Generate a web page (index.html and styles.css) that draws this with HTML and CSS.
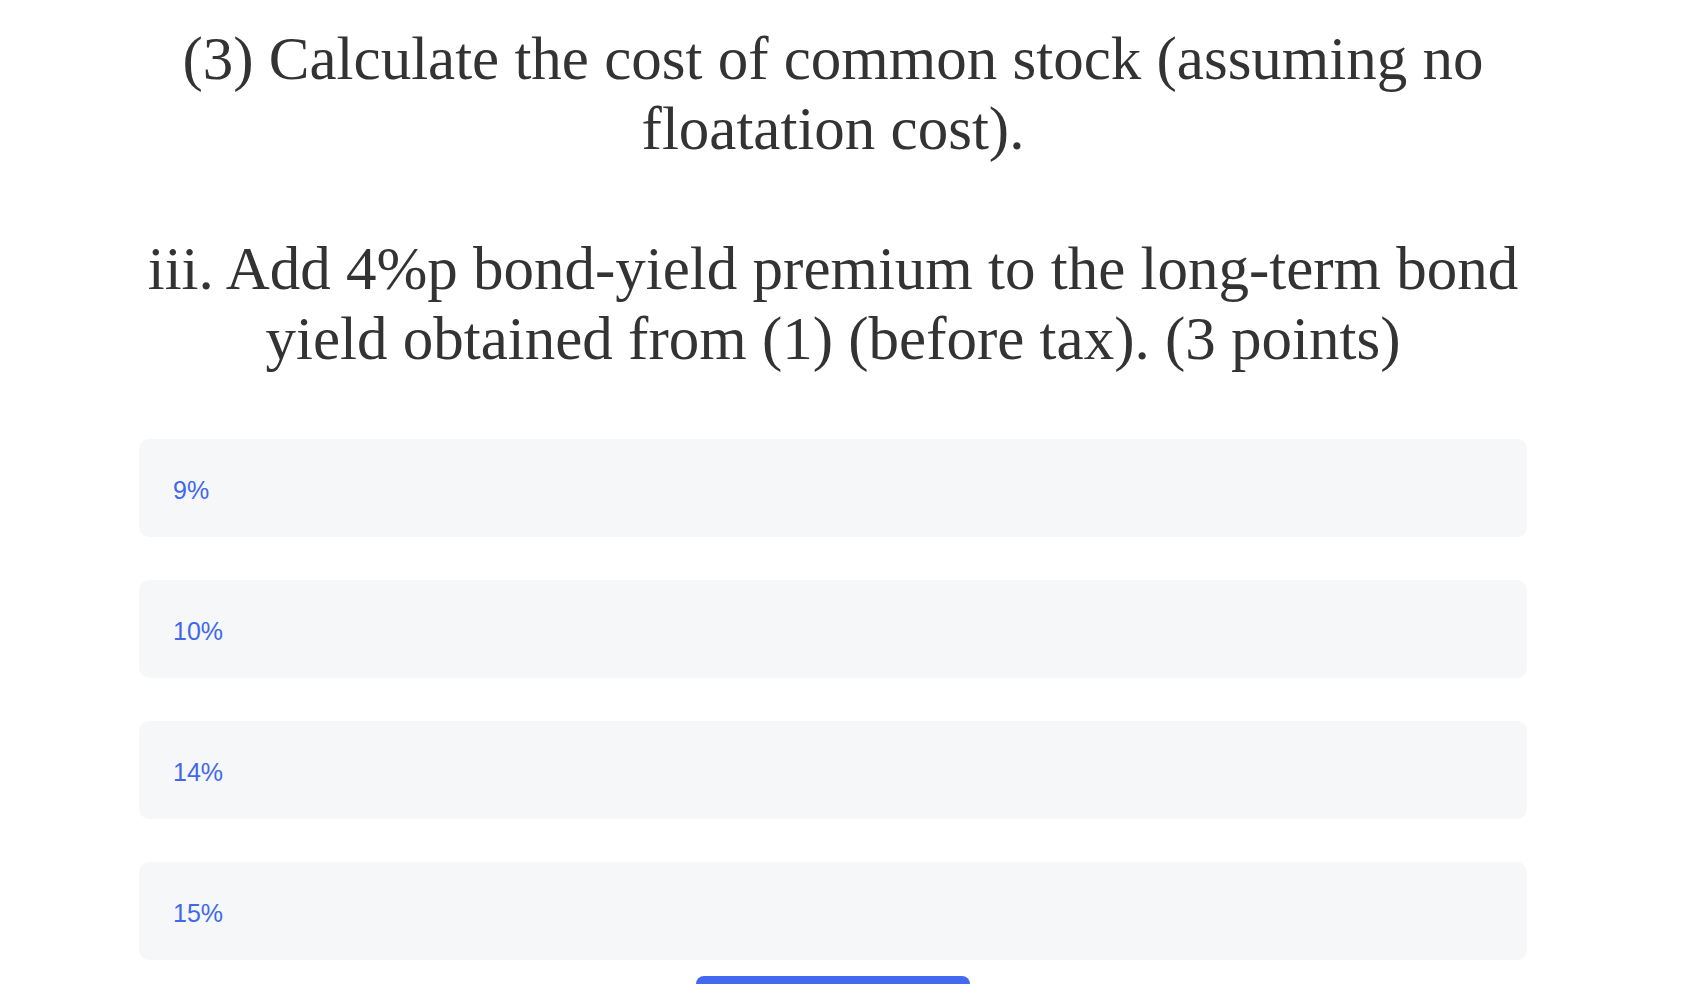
FILE: index.html
```html
<!DOCTYPE html>
<html lang="en">
<head>
    <meta charset="UTF-8">
    <meta name="viewport" content="width=device-width, initial-scale=1.0">
    <title>Quiz</title>
    <link rel="stylesheet" href="styles.css">
</head>
<body>
    <main class="quiz">
        <h1 class="question-title">(3) Calculate the cost of common stock (assuming no floatation cost).</h1>
        <h2 class="question-text">iii. Add 4%p bond-yield premium to the long-term bond yield obtained from (1) (before tax). (3 points)</h2>

        <ul class="options">
            <li><button class="option">9%</button></li>
            <li><button class="option">10%</button></li>
            <li><button class="option">14%</button></li>
            <li><button class="option">15%</button></li>
        </ul>

        <button class="submit-btn">Submit</button>
    </main>
</body>
</html>
```

FILE: styles.css
```css
body {
    margin: 0;
    padding: 0 28px 0 0;
    background: #fff;
    font-family: "Liberation Sans", Arial, sans-serif;
}
.quiz {
    max-width: 1388px;
    margin: 0 auto;
    padding-top: 24px;
    display: flex;
    flex-direction: column;
    align-items: center;
}
.question-title,
.question-text {
    margin: 0;
    font-family: "Liberation Serif", Georgia, serif;
    font-weight: normal;
    font-size: 61px;
    line-height: 70px;
    color: #333;
    text-align: center;
}
.question-title {
    margin-bottom: 70px;
}
.question-text {
    margin-bottom: 65px;
}
.options {
    list-style: none;
    margin: 0;
    padding: 0;
    width: 100%;
    display: flex;
    flex-direction: column;
    gap: 43px;
}
.option {
    display: block;
    width: 100%;
    padding: 37px 34px 33px;
    border: none;
    border-radius: 10px;
    background-color: #f6f7f9;
    color: #4068ec;
    font-family: inherit;
    font-size: 25px;
    line-height: 28px;
    text-align: left;
    cursor: pointer;
}
.option:hover {
    background-color: #eef0f4;
}
.submit-btn {
    margin-top: 16px;
    width: 274px;
    padding: 14px 0;
    border: none;
    border-radius: 8px;
    background-color: #4269ef;
    color: #fff;
    font-family: inherit;
    font-size: 20px;
    cursor: pointer;
}
```
